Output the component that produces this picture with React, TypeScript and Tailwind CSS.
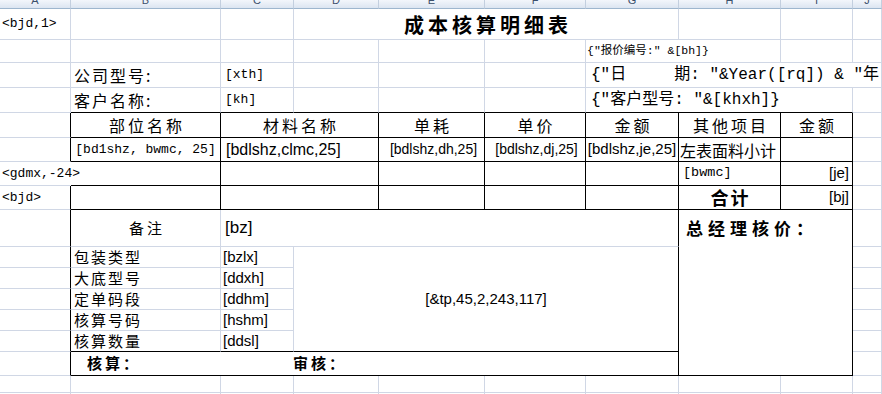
import type { ReactNode } from 'react';

const mono = "font-['Liberation_Mono','Noto_Sans_CJK_SC',monospace]";
const sans = "font-['Liberation_Sans','Noto_Sans_CJK_SC',sans-serif]";
const cjk = "font-['Noto_Sans_CJK_SC',sans-serif]";

const K = 'border-r-black';
const KB = 'border-b-black';

const letters = ['A', 'B', 'C', 'D', 'E', 'F', 'G', 'H', 'I', 'J'];

type CellProps = {
  r?: string;
  b?: string;
  className?: string;
  children?: ReactNode;
};

function Cell({ r = 'border-r-[#d0d7e5]', b = 'border-b-[#d0d7e5]', className = '', children }: CellProps) {
  return (
    <div className={`flex min-w-0 items-center whitespace-pre border-r border-b ${r} ${b} ${className}`}>
      {children}
    </div>
  );
}

function Blank({ n }: { n: number }) {
  return (
    <>
      {Array.from({ length: n }).map((_, i) => (
        <Cell key={i} />
      ))}
    </>
  );
}

export default function App() {
  return (
    <div className="h-[394px] w-[882px] overflow-hidden bg-white text-black">
      <div className="grid grid-cols-[71px_150px_73px_85px_106px_101px_93px_102px_72px_minmax(0,1fr)] grid-rows-[9px_31px_23px_25px_25px_25px_24px_24px_24px_37px_21px_21px_21px_21px_21px_24px_17px_20px]">
        {/* column headers, scrolled so only the bottom of the letters shows */}
        {letters.map((l) => (
          <div
            key={l}
            className="flex justify-center overflow-hidden border-r border-b border-r-[#c3cfdf] border-b-[#9eb6ce] bg-linear-to-b from-[#f3f6fb] to-[#dce5f1]"
          >
            <span className="-mt-[5px] font-['Liberation_Sans',sans-serif] text-[11px] leading-[11px] text-[#3b4f6b]">{l}</span>
          </div>
        ))}

        {/* row 1 */}
        <Cell className={`pl-[2px] text-[13px] ${mono}`}>{'<bjd,1>'}</Cell>
        <Blank n={2} />
        <Cell className={`col-span-4 items-end justify-center pb-[2px] pl-[4px] text-[20px] leading-[24px] font-bold tracking-[4px] ${cjk}`}>
          成本核算明细表
        </Cell>
        <Blank n={3} />

        {/* row 2 */}
        <Blank n={6} />
        <Cell className={`col-span-2 pl-[1px] text-[11.5px] ${mono}`}>{'{"报价编号:" &[bh]}'}</Cell>
        <Blank n={2} />

        {/* row 3 */}
        <Cell />
        <Cell className={`pl-[3px] text-[16px] tracking-[2px] ${cjk}`}>公司型号:</Cell>
        <Cell className={`pl-[4px] text-[13px] ${mono}`}>[xth]</Cell>
        <Blank n={3} />
        <Cell className={`col-span-4 pl-[5px] text-[16px] ${mono}`}>{'{"日     期: "&Year([rq]) & "年'}</Cell>

        {/* row 4 */}
        <Cell />
        <Cell b={KB} className={`pl-[3px] text-[16px] tracking-[2px] ${cjk}`}>客户名称:</Cell>
        <Cell b={KB} className={`pl-[4px] text-[13px] ${mono}`}>[kh]</Cell>
        <Cell b={KB} />
        <Cell b={KB} />
        <Cell b={KB} />
        <Cell b={KB} className={`col-span-3 pl-[5px] text-[16px] ${mono}`}>{'{"客户型号: "&[khxh]}'}</Cell>
        <Cell />

        {/* row 5: table header */}
        <Cell r={K} />
        <Cell r={K} b={KB} className={`justify-center pl-[3px] text-[16px] tracking-[3px] ${cjk}`}>部位名称</Cell>
        <Cell r={K} b={KB} className={`col-span-2 justify-center pl-[3px] text-[16px] tracking-[3px] ${cjk}`}>材料名称</Cell>
        <Cell r={K} b={KB} className={`justify-center pl-[3px] text-[16px] tracking-[3px] ${cjk}`}>单耗</Cell>
        <Cell r={K} b={KB} className={`justify-center pl-[3px] text-[16px] tracking-[3px] ${cjk}`}>单价</Cell>
        <Cell r={K} b={KB} className={`justify-center pl-[3px] text-[16px] tracking-[3px] ${cjk}`}>金额</Cell>
        <Cell r={K} b={KB} className={`justify-center pl-[3px] text-[16px] tracking-[3px] ${cjk}`}>其他项目</Cell>
        <Cell r={K} b={KB} className={`justify-center pl-[3px] text-[16px] tracking-[3px] ${cjk}`}>金额</Cell>
        <Cell />

        {/* row 6 */}
        <Cell r={K} />
        <Cell r={K} b={KB} className={`justify-center text-[13px] ${mono}`}>[bd1shz, bwmc, 25]</Cell>
        <Cell r={K} b={KB} className={`col-span-2 pl-[5px] text-[16px] ${sans}`}>[bdlshz,clmc,25]</Cell>
        <Cell r={K} b={KB} className={`justify-center pl-[4px] text-[14px] ${sans}`}>[bdlshz,dh,25]</Cell>
        <Cell r={K} b={KB} className={`justify-center pl-[3px] text-[14px] ${sans}`}>[bdlshz,dj,25]</Cell>
        <Cell r={K} b={KB} className={`justify-center text-[15px] ${sans}`}>[bdlshz,je,25]</Cell>
        <Cell r={K} b={KB} className={`pl-[1px] text-[16px] ${cjk}`}>左表面料小计</Cell>
        <Cell r={K} b={KB} />
        <Cell />

        {/* row 7 */}
        <Cell r="border-r-white" className={`relative z-10 pl-[2px] text-[13px] ${mono}`}>{'<gdmx,-24>'}</Cell>
        <Cell r={K} b={KB} />
        <Cell r={K} b={KB} className="col-span-2" />
        <Cell r={K} b={KB} />
        <Cell r={K} b={KB} />
        <Cell r={K} b={KB} />
        <Cell r={K} b={KB} className={`pl-[4px] text-[13.5px] ${mono}`}>[bwmc]</Cell>
        <Cell r={K} b={KB} className={`justify-end pr-[3px] text-[15px] ${sans}`}>[je]</Cell>
        <Cell />

        {/* row 8 */}
        <Cell r={K} className={`pl-[2px] text-[13px] ${mono}`}>{'<bjd>'}</Cell>
        <Cell r={K} b={KB} />
        <Cell r={K} b={KB} className="col-span-2" />
        <Cell r={K} b={KB} />
        <Cell r={K} b={KB} />
        <Cell r={K} b={KB} />
        <Cell r={K} b={KB} className={`justify-center pl-[2px] text-[18px] font-bold tracking-[2px] ${cjk}`}>合计</Cell>
        <Cell r={K} b={KB} className={`justify-end pr-[3px] text-[15px] ${sans}`}>[bj]</Cell>
        <Cell />

        {/* row 9 */}
        <Cell r={K} />
        <Cell className={`justify-center pl-[3px] text-[15px] tracking-[3px] ${cjk}`}>备注</Cell>
        <Cell r={K} className={`col-span-5 pl-[4px] text-[17px] ${sans}`}>[bz]</Cell>
        <Cell r={K} b={KB} className={`col-span-2 row-span-7 items-start pt-[5px] pl-[7px] text-[17px] font-bold tracking-[5px] ${cjk}`}>
          总经理核价：
        </Cell>
        <Cell />

        {/* rows 10-14 */}
        <Cell r={K} />
        <Cell className={`pl-[3px] text-[15px] tracking-[2px] ${cjk}`}>包装类型</Cell>
        <Cell className={`pl-[2px] text-[15px] ${sans}`}>[bzlx]</Cell>
        <Cell r={K} b={KB} className={`col-span-4 row-span-5 justify-center text-[15px] ${sans}`}>[&amp;tp,45,2,243,117]</Cell>
        <Cell />

        <Cell r={K} />
        <Cell className={`pl-[3px] text-[15px] tracking-[2px] ${cjk}`}>大底型号</Cell>
        <Cell className={`pl-[2px] text-[15px] ${sans}`}>[ddxh]</Cell>
        <Cell />

        <Cell r={K} />
        <Cell className={`pl-[3px] text-[15px] tracking-[2px] ${cjk}`}>定单码段</Cell>
        <Cell className={`pl-[2px] text-[15px] ${sans}`}>[ddhm]</Cell>
        <Cell />

        <Cell r={K} />
        <Cell className={`pl-[3px] text-[15px] tracking-[2px] ${cjk}`}>核算号码</Cell>
        <Cell className={`pl-[2px] text-[15px] ${sans}`}>[hshm]</Cell>
        <Cell />

        <Cell r={K} />
        <Cell b={KB} className={`pl-[3px] text-[15px] tracking-[2px] ${cjk}`}>核算数量</Cell>
        <Cell b={KB} className={`pl-[2px] text-[15px] ${sans}`}>[ddsl]</Cell>
        <Cell />

        {/* row 15 */}
        <Cell r={K} />
        <Cell r={K} b={KB} className={`col-span-6 pl-[16px] text-[15px] font-semibold tracking-[3px] ${cjk}`}>
          <span className="w-[206px]">核算：</span>
          <span>审核：</span>
        </Cell>
        <Cell />

        {/* rows 16-17 */}
        <Blank n={10} />
        <Blank n={10} />
      </div>
    </div>
  );
}
